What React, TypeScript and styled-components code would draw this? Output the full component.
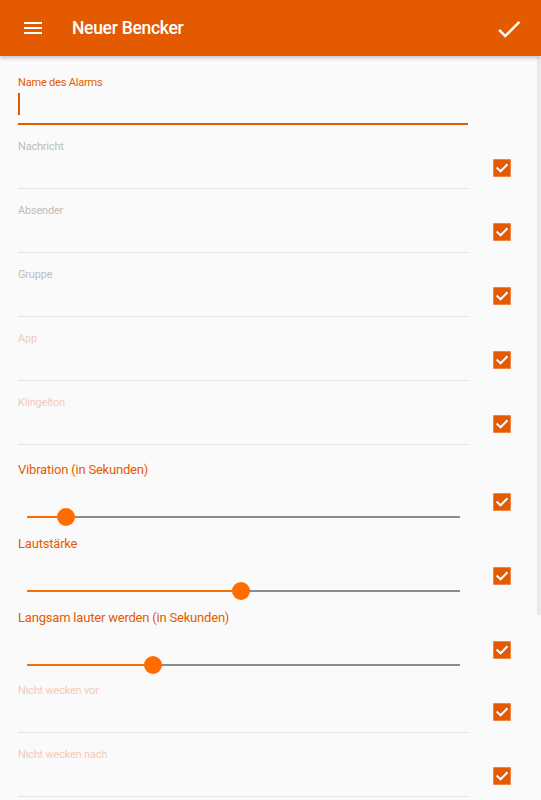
import React from 'react';
import styled, { createGlobalStyle } from 'styled-components';

const GlobalStyle = createGlobalStyle`
  html, body {
    margin: 0;
    padding: 0;
    background: #fafafa;
    font-family: Roboto, "Noto Sans", sans-serif;
    overflow: hidden;
  }
`;

const ORANGE = '#e35a00';
const BRIGHT = '#ff6d00';

type Hint = 'gray' | 'pale';

interface TextRowData {
  label: string;
  hint: Hint;
}

interface SliderData {
  label: string;
  value: number;
}

const topRows: TextRowData[] = [
  { label: 'Nachricht', hint: 'gray' },
  { label: 'Absender', hint: 'gray' },
  { label: 'Gruppe', hint: 'gray' },
  { label: 'App', hint: 'pale' },
  { label: 'Klingelton', hint: 'pale' },
];

const sliders: SliderData[] = [
  { label: 'Vibration (in Sekunden)', value: 0.09 },
  { label: 'Lautstärke', value: 0.495 },
  { label: 'Langsam lauter werden (in Sekunden)', value: 0.292 },
];

const bottomRows: TextRowData[] = [
  { label: 'Nicht wecken vor', hint: 'pale' },
  { label: 'Nicht wecken nach', hint: 'pale' },
];

const Checkbox: React.FC<{ offset: number }> = ({ offset }) => (
  <CheckBoxBox offset={offset}>
    <svg width="18" height="18" viewBox="0 0 18 18">
      <path
        d="M4.3 9.2 L7.6 12.3 L13.8 6"
        fill="none"
        stroke="#fff"
        strokeWidth="2"
        strokeLinecap="square"
      />
    </svg>
  </CheckBoxBox>
);

const TextRow: React.FC<TextRowData & { lead?: number }> = ({ label, hint, lead }) => (
  <Row>
    <Field lead={lead ?? 14}>
      <HintLabel hint={hint}>{label}</HintLabel>
      <InputArea />
    </Field>
    <Checkbox offset={12} />
  </Row>
);

const SliderRow: React.FC<SliderData> = ({ label, value }) => (
  <Row>
    <SliderField>
      <SliderLabel>{label}</SliderLabel>
      <SliderBox>
        <Track>
          <TrackFill style={{ width: `${value * 100}%` }} />
          <Thumb style={{ left: `${value * 100}%` }} />
        </Track>
      </SliderBox>
    </SliderField>
    <Checkbox offset={11} />
  </Row>
);

const App: React.FC = () => {
  return (
    <Screen>
      <GlobalStyle />
      <AppBar>
        <IconButton aria-label="menu">
          <svg width="24" height="24" viewBox="0 0 24 24">
            <path d="M3 18h18v-2H3v2zm0-5h18v-2H3v2zm0-7v2h18V6H3z" fill="#fff" />
          </svg>
        </IconButton>
        <Title>Neuer Bencker</Title>
        <SaveButton aria-label="save">
          <svg width="30" height="30" viewBox="0 0 24 24">
            <path d="M9 16.2L4.8 12l-1.4 1.4L9 19 21 7l-1.4-1.4L9 16.2z" fill="#fff" />
          </svg>
        </SaveButton>
      </AppBar>
      <Content>
        <NameField>
          <ActiveLabel>Name des Alarms</ActiveLabel>
          <ActiveInput>
            <Caret />
          </ActiveInput>
        </NameField>
        {topRows.map((r) => (
          <TextRow key={r.label} {...r} />
        ))}
        <SliderGroup>
          {sliders.map((s) => (
            <SliderRow key={s.label} {...s} />
          ))}
        </SliderGroup>
        {bottomRows.map((r, i) => (
          <TextRow key={r.label} {...r} lead={i === 0 ? 13 : 14} />
        ))}
        <ScrollThumb />
      </Content>
    </Screen>
  );
};

export default App;

const Screen = styled.div`
  width: 541px;
  height: 800px;
  overflow: hidden;
  background: #fafafa;
  display: flex;
  flex-direction: column;
`;

const AppBar = styled.header`
  height: 56px;
  flex: none;
  background: ${ORANGE};
  display: flex;
  align-items: center;
  box-shadow: 0 2px 4px rgba(0, 0, 0, 0.22);
  position: relative;
  z-index: 2;
`;

const IconButton = styled.div`
  width: 24px;
  height: 24px;
  margin-left: 21px;
  display: flex;
`;

const Title = styled.h1`
  margin: 0 0 0 27px;
  flex: 1;
  color: #fff;
  font-size: 17.5px;
  font-weight: 500;
  letter-spacing: -0.3px;
`;

const SaveButton = styled.div`
  width: 30px;
  height: 30px;
  margin-right: 17px;
  margin-top: 1px;
  display: flex;
`;

const Content = styled.main`
  position: relative;
  flex: 1;
  padding-left: 18px;
`;

const ScrollThumb = styled.div`
  position: absolute;
  right: 0;
  top: 1px;
  width: 4px;
  height: 558px;
  background: #e9e9e9;
`;

const NameField = styled.div`
  width: 450px;
  padding-top: 19px;
  border-bottom: 2px solid ${ORANGE};
`;

const ActiveLabel = styled.div`
  font-size: 11px;
  line-height: 16px;
  letter-spacing: -0.2px;
  color: ${ORANGE};
`;

const ActiveInput = styled.div`
  height: 32px;
  padding-top: 2px;
  box-sizing: border-box;
`;

const Caret = styled.div`
  width: 2px;
  height: 22px;
  background: ${ORANGE};
`;

const Row = styled.div`
  display: flex;
  align-items: flex-end;
`;

const Field = styled.div<{ lead: number }>`
  width: 450px;
  padding-top: ${(p) => p.lead}px;
  border-bottom: 1px solid #e3e3e3;
`;

const HintLabel = styled.div<{ hint: Hint }>`
  font-size: 11px;
  line-height: 16px;
  letter-spacing: -0.2px;
  color: ${(p) => (p.hint === 'gray' ? '#bdbdbd' : '#f2cbb8')};
`;

const InputArea = styled.div`
  height: 33px;
`;

const CheckBoxBox = styled.div<{ offset: number }>`
  width: 18px;
  height: 18px;
  box-sizing: border-box;
  margin: 0 0 ${(p) => p.offset}px 25px;
  border-radius: 2px;
  background: ${ORANGE};
  box-shadow: inset 0 0 0 1px #f0874a;
  display: flex;
`;

const SliderGroup = styled.div`
  display: flex;
  flex-direction: column;
  gap: 13px;
  margin-top: 16px;
`;

const SliderField = styled.div`
  width: 450px;
`;

const SliderLabel = styled.div`
  font-size: 13px;
  line-height: 18px;
  letter-spacing: -0.2px;
  color: ${ORANGE};
`;

const SliderBox = styled.div`
  height: 43px;
  padding: 37px 8px 0 9px;
  box-sizing: border-box;
`;

const Track = styled.div`
  position: relative;
  height: 2px;
  background: #8c8c8c;
`;

const TrackFill = styled.div`
  height: 2px;
  background: ${BRIGHT};
`;

const Thumb = styled.div`
  position: absolute;
  top: -8px;
  width: 18px;
  height: 18px;
  margin-left: -9px;
  border-radius: 50%;
  background: ${BRIGHT};
`;
